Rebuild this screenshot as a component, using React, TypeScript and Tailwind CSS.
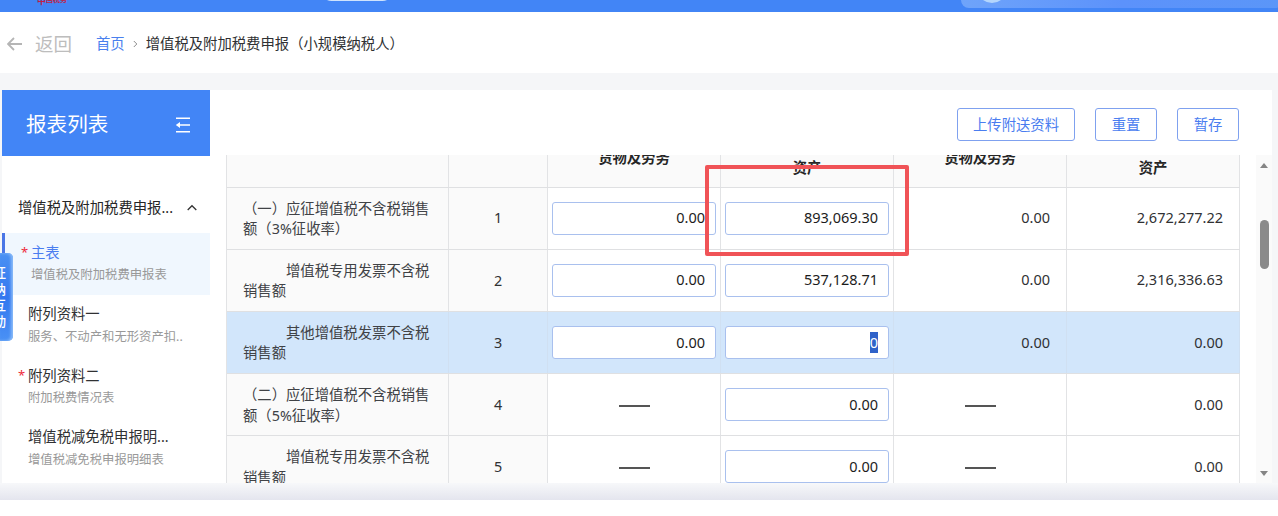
import React from "react";

type Cell = { kind: "input" | "text" | "dash" | "selected"; value?: string };
type Row = { label: string; indent: string; no: number; active?: boolean; cells: Cell[] };

const input = (value: string): Cell => ({ kind: "input", value });
const text = (value: string): Cell => ({ kind: "text", value });
const dash: Cell = { kind: "dash" };

const rows: Row[] = [
  { label: "（一）应征增值税不含税销售额（3%征收率）", indent: "indent-0", no: 1, cells: [input("0.00"), input("893,069.30"), text("0.00"), text("2,672,277.22")] },
  { label: "增值税专用发票不含税销售额", indent: "indent-[43px]", no: 2, cells: [input("0.00"), input("537,128.71"), text("0.00"), text("2,316,336.63")] },
  { label: "其他增值税发票不含税销售额", indent: "indent-[43px]", no: 3, active: true, cells: [input("0.00"), { kind: "selected", value: "0" }, text("0.00"), text("0.00")] },
  { label: "（二）应征增值税不含税销售额（5%征收率）", indent: "indent-0", no: 4, cells: [dash, input("0.00"), dash, text("0.00")] },
  { label: "增值税专用发票不含税销售额", indent: "indent-[43px]", no: 5, cells: [dash, input("0.00"), dash, text("0.00")] },
];

const menu = [
  { title: "主表", sub: "增值税及附加税费申报表", required: true, active: true },
  { title: "附列资料一", sub: "服务、不动产和无形资产扣..", required: false, active: false },
  { title: "附列资料二", sub: "附加税费情况表", required: true, active: false },
  { title: "增值税减免税申报明...", sub: "增值税减免税申报明细表", required: false, active: false },
];

const cols = "grid grid-cols-[222px_99px_173px_173px_173px_173px]";

function ValueCell({ cell, active }: { cell: Cell; active?: boolean }) {
  const border = active ? "border-[#d0e0f2]" : "border-[#e2e3e5]";
  if (cell.kind === "dash") {
    return (
      <div className={`flex items-center justify-center border-r pt-0.5 ${border}`}>
        <span className="h-0.5 w-[31px] bg-[#555]" />
      </div>
    );
  }
  if (cell.kind === "text") {
    return <div className={`flex items-center justify-end border-r pr-4 text-[14.500px] text-[#303133] ${border}`}>{cell.value}</div>;
  }
  return (
    <div className={`flex items-center border-r px-1 text-[14.500px] ${border}`}>
      <div className="flex h-[33px] w-full items-center justify-end rounded-[3px] border border-[#a9c0ee] bg-white pr-2.5 text-[#1c1c1c]">
        {cell.kind === "selected" ? <span className="bg-[#2f62c9] leading-[21px] text-white">{cell.value}</span> : cell.value}
      </div>
    </div>
  );
}

function Header() {
  return (
    <header className="relative h-3 overflow-hidden bg-[#4285f6]">
      <div className="absolute top-[-7px] left-[37px] flex items-end text-[#c01f45]">
        <span className="text-[9px] leading-[16px] font-bold">中</span>
        <span className="mb-0.5 text-[7px] leading-[14px] font-bold">国税务</span>
      </div>
      <div className="absolute top-[-20px] left-[321px] h-[21px] w-[72px] rounded-full bg-[#cfe3fd]" />
      <div className="absolute top-[-24px] left-[961px] h-8 w-[322px] rounded-lg bg-gradient-to-r from-[#6fa4fa] via-[#5c92fb] to-[#5b96f8]" />
      <div className="absolute top-[-27px] left-[977px] size-[30px] rounded-full bg-[#b4d6fc]" />
    </header>
  );
}

function Breadcrumb() {
  return (
    <nav className="flex h-[61px] items-center bg-white pt-0.5 pl-[7px]">
      <svg width="15" height="14" viewBox="0 0 15 14" fill="none" stroke="#b5b5b5" strokeWidth="1.8">
        <path d="M7 1 1 7l6 6M1 7h14" />
      </svg>
      <span className="ml-[13px] text-[18.5px] text-[#bdbdbd]">返回</span>
      <span className="ml-6 text-[#4a80ee]">首页</span>
      <svg className="ml-2" width="5" height="8" viewBox="0 0 5 8" fill="none" stroke="#8b8b8b">
        <path d="m.8 1 3 3-3 3" />
      </svg>
      <span className="ml-2 text-[#303133]">增值税及附加税费申报（小规模纳税人）</span>
    </nav>
  );
}

function Sidebar() {
  return (
    <aside className="flex w-[224px] shrink-0 flex-col bg-white">
      <div className="flex h-[65.500px] w-[208px] shrink-0 items-center justify-between bg-[#4285f6] pr-[19px] pl-6 text-white">
        <span className="pt-1 text-[20.600px]">报表列表</span>
        <svg className="mt-1" width="16" height="16" viewBox="0 0 16 16" fill="none" stroke="white" strokeWidth="1.4">
          <path d="M1 1.2h14M5 8h10M1 14.8h14" />
          <path d="M.8 8 5 5v6Z" fill="white" stroke="none" />
        </svg>
      </div>
      <div className="mt-[36.500px] flex h-[30px] items-center pt-0.5 pl-4 text-[#262626]">
        <span>增值税及附加税费申报...</span>
        <svg className="mb-0.5 ml-3.5" width="10" height="7" viewBox="0 0 10 7" fill="none" stroke="#333" strokeWidth="1.3">
          <path d="m.7 6 4.3-4.3L9.300 6" />
        </svg>
      </div>
      <ul className="mt-[11px]">
        {menu.map((m) => (
          <li
            key={m.title}
            className={
              m.active
                ? "h-[61.500px] w-[208px] border-l-[3px] border-[#4a76e6] bg-[#f0f7fe] pt-[9px] pl-4"
                : "h-[61.500px] w-[208px] pt-[9px] pl-4"
            }
          >
            <div className={m.active ? "flex h-[21px] items-center text-[#4a7df0]" : "flex h-[21px] items-center text-[#303133]"}>
              <span className="w-2.5 text-[13px] text-[#ee2b3b]">{m.required ? "*" : ""}</span>
              {m.title}
            </div>
            <div className="h-[22px] pl-2.5 text-[12.350px] leading-[23px] text-[#999]">{m.sub}</div>
          </li>
        ))}
      </ul>
    </aside>
  );
}

function Toolbar() {
  const button = "flex h-[33px] items-center justify-center rounded-[3px] border border-[#7fa1ef] pt-px text-[#4a7df0]";
  return (
    <div className="flex h-[65px] shrink-0 items-center justify-end pt-1 pr-[33px]">
      <button className={`${button} w-[118px]`}>上传附送资料</button>
      <button className={`${button} ml-5 w-[62px]`}>重置</button>
      <button className={`${button} ml-5 w-[62px]`}>暂存</button>
    </div>
  );
}

function Table() {
  const head = "overflow-hidden border-r border-[#e2e3e5] text-center font-bold text-[#262626]";
  return (
    <div className="h-[328px] w-[1014px] overflow-hidden border-l border-[#e2e3e5]">
      <div className={`${cols} h-[32.700px] border-b border-[#dfe0e2] bg-[#fafafa]`}>
        <div className={head} />
        <div className={head} />
        <div className={head}><div className="-mt-[7px] leading-5">货物及劳务</div></div>
        <div className={head}><div className="mt-[3px] leading-5">资产</div></div>
        <div className={head}><div className="-mt-[7px] leading-5">货物及劳务</div></div>
        <div className={head}><div className="mt-[3px] leading-5">资产</div></div>
      </div>
      {rows.map((r) => {
        const label = r.active ? "border-[#d0e0f2]" : "border-[#e2e3e5] bg-[#fafafa]";
        return (
          <div key={r.no} className={`${cols} h-[62.100px] border-b border-[#dfe0e2] ${r.active ? "bg-[#d2e6fb]" : ""}`}>
            <div className={`flex items-center border-r pt-0.5 pr-4 pl-4 text-[#404246] ${label}`}>
              <p className={`leading-[20.500px] ${r.indent}`}>{r.label}</p>
            </div>
            <div className={`flex items-center justify-center border-r text-[#303133] ${label}`}>{r.no}</div>
            {r.cells.map((c, i) => <ValueCell key={i} cell={c} active={r.active} />)}
          </div>
        );
      })}
    </div>
  );
}

function Scrollbar() {
  return (
    <div className="ml-auto flex h-[328px] w-4 flex-col items-center bg-[#fafafa]">
      <svg className="mt-2" width="8" height="5" viewBox="0 0 8 5"><path d="M4 0l4 5H0z" fill="#858585" /></svg>
      <div className="mt-[52px] h-[49px] w-[9px] rounded-full bg-[#8a8a8a]" />
      <svg className="mt-auto mb-[7px]" width="8" height="5" viewBox="0 0 8 5"><path d="M0 0h8L4 5z" fill="#858585" /></svg>
    </div>
  );
}

export default function App() {
  return (
    <div className="relative h-[516px] w-[1278px] overflow-hidden bg-white font-['Noto_Sans','Noto_Sans_CJK_SC',sans-serif] text-[14.350px]">
      <Header />
      <Breadcrumb />
      <main className="flex h-[410px] bg-[#f5f6f8] pt-[17px] pr-1.5 pl-0.5">
        <Sidebar />
        <section className="flex flex-1 flex-col bg-white">
          <Toolbar />
          <div className="flex">
            <Table />
            <Scrollbar />
          </div>
        </section>
      </main>
      <div className="h-[17px] bg-gradient-to-b from-[#f7f8fa] to-[#e4e5ee]" />
      <div className="absolute top-[165px] left-[705px] h-[91px] w-[204px] rounded-[2px] border-4 border-[#f05357]" />
      <div className="absolute top-[253px] left-0 flex h-[88px] w-[13px] flex-col items-end justify-center rounded-r-[5px] bg-gradient-to-b from-[#4b91f3] via-[#3377ef] to-[#4a91f5] pr-[7px] text-[13px] leading-[16.300px] font-medium text-white shadow-[inset_-2px_0_3px_#8cbcf8]">
        {"征纳互动".split("").map((c) => <span key={c}>{c}</span>)}
      </div>
    </div>
  );
}
